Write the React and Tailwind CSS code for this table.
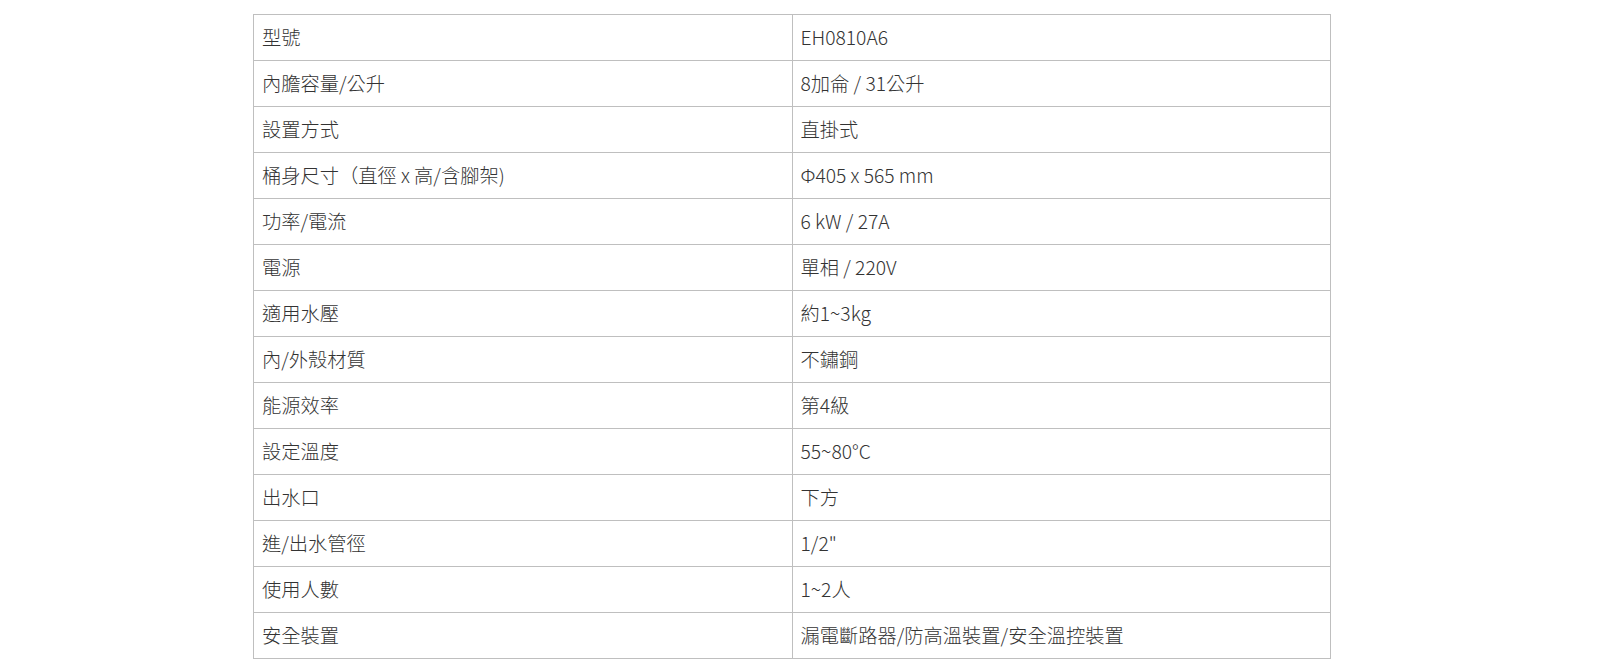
const rows = [
  ["型號", "EH0810A6"],
  ["內膽容量/公升", "8加侖 / 31公升"],
  ["設置方式", "直掛式"],
  ["桶身尺寸（直徑 x 高/含腳架)", "Φ405 x 565 mm"],
  ["功率/電流", "6 kW / 27A"],
  ["電源", "單相 / 220V"],
  ["適用水壓", "約1~3kg"],
  ["內/外殼材質", "不鏽鋼"],
  ["能源效率", "第4級"],
  ["設定溫度", "55~80°C"],
  ["出水口", "下方"],
  ["進/出水管徑", "1/2\""],
  ["使用人數", "1~2人"],
  ["安全裝置", "漏電斷路器/防高溫裝置/安全溫控裝置"],
];

export default function App() {
  return (
    <div className="bg-white min-h-screen pt-[14px] pl-[253px]">
      <table
        className="w-[1078px] border-collapse table-fixed text-[19.25px] font-light text-[#333]"
        style={{ fontFamily: '"Noto Sans CJK TC", "Noto Sans", sans-serif' }}
      >
        <tbody>
          {rows.map(([k, v]) => (
            <tr key={k} className="h-[46px]">
              <td className="border border-[#bfbfbf] px-2 align-middle">{k}</td>
              <td className="border border-[#bfbfbf] px-2 align-middle">{v}</td>
            </tr>
          ))}
        </tbody>
      </table>
    </div>
  );
}
